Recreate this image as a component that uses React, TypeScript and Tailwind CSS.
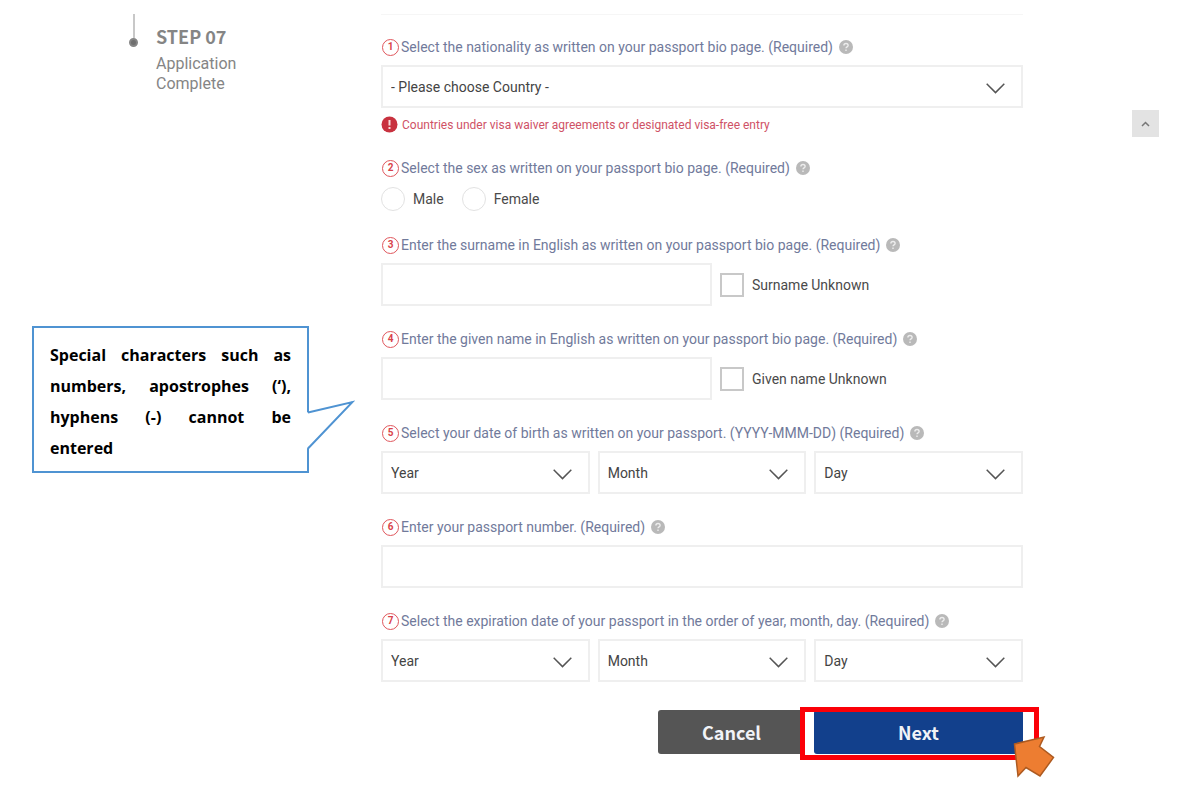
import type { ReactNode } from "react";

const selectOptions = {
  year: ["2025", "2026", "2027", "2028"],
  month: ["JAN", "FEB", "MAR", "APR", "MAY", "JUN"],
  day: ["01", "02", "03", "04", "05"],
};

function HelpIcon() {
  return (
    <svg width="14" height="14" viewBox="0 0 14 14" aria-hidden="true">
      <circle cx="7" cy="7" r="7" fill="#b9b9b9" />
      <path
        d="M4.9 5.6c0-1.3.9-2.1 2.1-2.1s2.1.8 2.1 1.9c0 1.4-2.1 1.5-2.1 2.9M7 9.6v1.3"
        fill="none"
        stroke="#ededed"
        strokeWidth="1.4"
      />
    </svg>
  );
}

function QuestionLabel({ n, htmlFor, children }: { n: number; htmlFor?: string; children: ReactNode }) {
  return (
    <div className="flex h-6 items-center">
      <span className="mr-0.5 ml-px flex size-[17px] shrink-0 items-center justify-center rounded-full border border-[#e0565c] text-[10px] leading-none font-bold text-[#d9434a]">
        {n}
      </span>
      <label htmlFor={htmlFor} className="whitespace-nowrap text-[#717a9b]">
        {children}
      </label>
      <button type="button" aria-label="Help" className="ml-1.5">
        <HelpIcon />
      </button>
    </div>
  );
}

function Question({ n, id, label, children }: { n: number; id?: string; label: string; children: ReactNode }) {
  return (
    <div className="flex flex-col gap-1.5">
      <QuestionLabel n={n} htmlFor={id}>
        {label}
      </QuestionLabel>
      {children}
    </div>
  );
}

function Select({ id, label, first, options }: { id: string; label: string; first: string; options: string[] }) {
  return (
    <div className="relative">
      <select
        id={id}
        aria-label={label}
        className="block h-[43px] w-full appearance-none rounded-none border-2 border-[#efefef] bg-white px-2 text-[#444]"
      >
        <option>{first}</option>
        {options.map((o) => (
          <option key={o}>{o}</option>
        ))}
      </select>
      <svg
        className="pointer-events-none absolute top-[18px] right-[18px]"
        width="19"
        height="11"
        viewBox="0 0 19 11"
        fill="none"
        stroke="#555"
        strokeWidth="1.5"
      >
        <path d="M.7.8 9.5 9.6 18.3.8" />
      </svg>
    </div>
  );
}

function DateSelects({ id }: { id: string }) {
  return (
    <div className="grid grid-cols-3 gap-2">
      <Select id={id} label="Year" first="Year" options={selectOptions.year} />
      <Select id={`${id}-month`} label="Month" first="Month" options={selectOptions.month} />
      <Select id={`${id}-day`} label="Day" first="Day" options={selectOptions.day} />
    </div>
  );
}

function TextBox({ id }: { id: string }) {
  return <input id={id} type="text" className="h-[43px] w-full border-2 border-[#efefef] bg-white px-2 text-[#444]" />;
}

function NameField({ id, unknown }: { id: string; unknown: string }) {
  return (
    <div className="flex items-center gap-2">
      <div className="w-[331px]">
        <TextBox id={id} />
      </div>
      <label className="flex items-center gap-2 text-[#4a4a4a]">
        <input type="checkbox" className="size-6 appearance-none border-2 border-[#c8c8c8] bg-white checked:bg-[#12408c]" />
        {unknown}
      </label>
    </div>
  );
}

function Radio({ value }: { value: string }) {
  return (
    <label className="flex items-center gap-2 text-[#4a4a4a]">
      <input
        type="radio"
        name="sex"
        value={value}
        className="size-6 appearance-none rounded-full border border-[#e2e2e2] bg-white checked:border-8 checked:border-[#12408c]"
      />
      {value}
    </label>
  );
}

function Callout() {
  return (
    <div className="relative mt-[232px] ml-8 w-[277px] border-2 border-[#4f93d2] bg-white px-4 pt-3 pb-[7px]">
      <p className="font-['Open_Sans',sans-serif] text-base leading-[31px] font-bold text-black">
        <span className="block text-justify [text-align-last:justify]">Special characters such as </span>
        <span className="block text-justify [text-align-last:justify]">numbers, apostrophes (‘), </span>
        <span className="block text-justify [text-align-last:justify]">hyphens (-) cannot be </span>
        <span className="block">entered</span>
      </p>
      <svg className="absolute top-[72px] left-[273px]" width="48" height="54" viewBox="0 0 48 54">
        <path d="M0 12.5 45.5 2 0 48.5" fill="#fff" />
        <path d="M1 12.5 45.5 2 1 48.5" fill="none" stroke="#4f93d2" strokeWidth="2" />
      </svg>
    </div>
  );
}

function Actions() {
  return (
    <div className="mt-[7px] flex justify-end gap-[9px] font-['Noto_Sans_CJK_KR',sans-serif] text-lg font-bold text-[#f1f3f7]">
      <button type="button" className="h-11 w-[147px] rounded-[3px] bg-[#555]">
        Cancel
      </button>
      <div className="relative w-[209px]">
        <button type="submit" className="h-11 w-full rounded-[3px] bg-[#12408c]">
          Next
        </button>
        <div className="pointer-events-none absolute -top-[3px] -right-4 -bottom-1.5 -left-3.5 border-[5px] border-[#fb0007]" />
        <svg className="pointer-events-none absolute top-[25px] left-[199px]" width="43" height="43" viewBox="0 0 43 43">
          <path
            d="M1.5 9 31 2 26.5 11.5 40.5 22.5 27 41 13 32.5 5 41Z"
            fill="#ed7d31"
            stroke="#ad5a20"
            strokeWidth="1.5"
          />
        </svg>
      </div>
    </div>
  );
}

export default function App() {
  return (
    <div className="flex min-h-screen bg-white pt-3.5 font-[Roboto,sans-serif] text-sm">
      <aside className="w-[381px] shrink-0">
        <div className="flex gap-[18px] pl-[129px] text-[#858585]">
          <div className="flex w-[9px] flex-col items-center">
            <div className="h-6 w-0.5 bg-[#c8c8c8]" />
            <div className="size-[9px] rounded-full border-2 border-[#858585] bg-[#6f6f6f]" />
          </div>
          <div className="pt-2.5">
            <h2 className="font-['Noto_Sans_CJK_KR',sans-serif] text-lg leading-6 font-bold">STEP 07</h2>
            <p className="mt-1.5 text-base leading-5">
              Application
              <br />
              Complete
            </p>
          </div>
        </div>
        <Callout />
      </aside>

      <main className="min-w-0 flex-1">
        <form className="flex flex-col gap-[21px] border-t border-[#f6f6f6] pt-5" onSubmit={(e) => e.preventDefault()}>
          <Question n={1} id="country" label="Select the nationality as written on your passport bio page. (Required)">
            <Select
              id="country"
              label="Country"
              first="- Please choose Country -"
              options={["Australia", "Canada", "France", "Japan", "United States"]}
            />
            <div className="flex h-[21px] items-center gap-1 text-xs text-[#cf5266]">
              <svg width="17" height="17" viewBox="0 0 17 17" aria-hidden="true">
                <circle cx="8.5" cy="8.5" r="8" fill="#c8323f" />
                <path d="M8.5 4v5.5M8.5 11v2" stroke="#f7dada" strokeWidth="2" />
              </svg>
              Countries under visa waiver agreements or designated visa-free entry
            </div>
          </Question>

          <Question n={2} label="Select the sex as written on your passport bio page. (Required)">
            <div className="flex h-[26px] items-center gap-[18px]">
              <Radio value="Male" />
              <Radio value="Female" />
            </div>
          </Question>

          <Question n={3} id="surname" label="Enter the surname in English as written on your passport bio page. (Required)">
            <NameField id="surname" unknown="Surname Unknown" />
          </Question>

          <Question n={4} id="given-name" label="Enter the given name in English as written on your passport bio page. (Required)">
            <NameField id="given-name" unknown="Given name Unknown" />
          </Question>

          <Question n={5} id="birth" label="Select your date of birth as written on your passport. (YYYY-MMM-DD) (Required)">
            <DateSelects id="birth" />
          </Question>

          <Question n={6} id="passport" label="Enter your passport number. (Required)">
            <TextBox id="passport" />
          </Question>

          <Question n={7} id="expiry" label="Select the expiration date of your passport in the order of year, month, day. (Required)">
            <DateSelects id="expiry" />
          </Question>

          <Actions />
        </form>
      </main>

      <div className="w-[177px] shrink-0 pt-24 pl-[109px]">
        <button type="button" aria-label="Scroll to top" className="flex size-[27px] items-center justify-center bg-[#e3e3e3]">
          <svg width="9" height="6" viewBox="0 0 9 6" fill="none" stroke="#777" strokeWidth="1.5">
            <path d="M1 5 4.5 1.5 8 5" />
          </svg>
        </button>
      </div>
    </div>
  );
}
